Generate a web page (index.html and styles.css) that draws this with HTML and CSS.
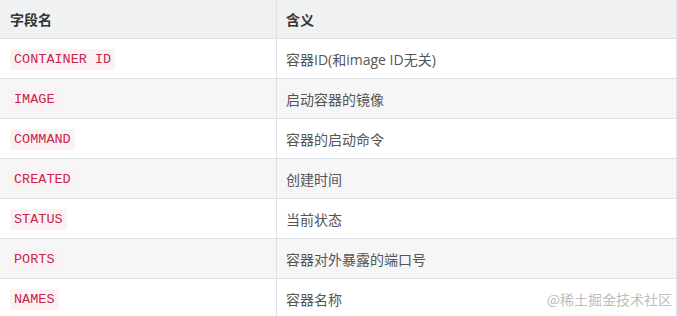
FILE: index.html
```html
<!DOCTYPE html>
<html lang="zh-CN">
<head>
<meta charset="utf-8">
<title>docker ps 字段</title>
<link rel="stylesheet" href="styles.css">
</head>
<body>
<div class="page">
  <table class="fields">
    <thead>
      <tr><th class="c1">字段名</th><th class="c2">含义</th></tr>
    </thead>
    <tbody>
      <tr><td><code>CONTAINER ID</code></td><td>容器ID(和image ID无关)</td></tr>
      <tr><td><code>IMAGE</code></td><td>启动容器的镜像</td></tr>
      <tr><td><code>COMMAND</code></td><td>容器的启动命令</td></tr>
      <tr><td><code>CREATED</code></td><td>创建时间</td></tr>
      <tr><td><code>STATUS</code></td><td>当前状态</td></tr>
      <tr><td><code>PORTS</code></td><td>容器对外暴露的端口号</td></tr>
      <tr><td><code>NAMES</code></td><td>容器名称</td></tr>
    </tbody>
  </table>
  <div class="watermark">@稀土掘金技术社区</div>
</div>
</body>
</html>
```
FILE: styles.css
```css
html, body {
  margin: 0;
  padding: 0;
  background: #ffffff;
}
.page {
  position: relative;
  width: 677px;
  height: 316px;
  overflow: hidden;
  font-family: "Open Sans", "Noto Sans CJK SC", sans-serif;
  color: #333333;
}
.fields {
  width: 677px;
  border-collapse: collapse;
  table-layout: fixed;
  font-size: 14px;
}
.fields .c1 { width: 266px; }
.fields th,
.fields td {
  text-align: left;
  padding: 0 0 0 9px;
  border-right: 1px solid #dfe2e5;
  border-bottom: 1px solid #dfe2e5;
  vertical-align: middle;
}
.fields th {
  height: 38px;
  background: #eff1f3;
  font-weight: 700;
  font-family: "Noto Sans CJK SC", sans-serif;
  color: #353535;
}
.fields td {
  height: 39px;
  color: #555555;
}
.fields td:first-child,
.fields th:first-child {
  padding-left: 10px;
}
.fields tbody tr:nth-child(2n) td {
  background: #f6f6f6;
}
.fields code {
  display: inline-block;
  font-family: "Liberation Mono", monospace;
  font-size: 13.5px;
  line-height: 21px;
  padding: 0 4px;
  color: #c7254e;
  background: #fbf2f4;
  border-radius: 2px;
}
.watermark {
  position: absolute;
  right: 5px;
  bottom: 7px;
  font-family: "Noto Sans CJK SC", sans-serif;
  font-size: 14px;
  color: #bdbdbd;
}
```
